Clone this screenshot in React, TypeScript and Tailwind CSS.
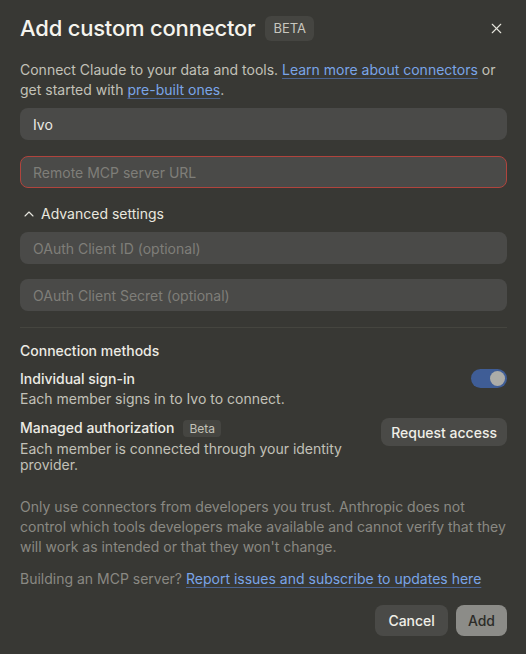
import { X, ChevronUp } from 'lucide-react';

function Field({ placeholder, value, error }: { placeholder: string; value?: string; error?: boolean }) {
  return (
    <div
      className={`h-8 rounded-lg bg-[#4a4a48] px-3 flex items-center text-[14px] ${
        error ? 'border border-[#b0443d]' : 'border border-transparent'
      }`}
    >
      {value ? (
        <span className="text-[#ecebe4]">{value}</span>
      ) : (
        <span className="text-[#7f7e79]">{placeholder}</span>
      )}
    </div>
  );
}

function Link({ children }: { children: React.ReactNode }) {
  return (
    <a className="text-[#7aa5e8] underline decoration-[#4b6390] underline-offset-[3px] decoration-1">{children}</a>
  );
}

export default function App() {
  return (
    <div className="w-[526px] h-[654px] bg-[#383834] pl-5 pr-[19px] pt-3 font-['Inter',sans-serif] text-[#ecebe4]">
      {/* Header */}
      <div className="flex items-center justify-between">
        <div className="flex items-center gap-2.5">
          <h1 className="text-[22px] font-medium tracking-[-0.2px] text-[#f5f4ee]">Add custom connector</h1>
          <span className="rounded-md bg-[#454541] px-2 py-[3px] text-[13px] text-[#c8c7bf]">BETA</span>
        </div>
        <X className="w-[17px] h-[17px] text-[#e5e4dc] mr-[2px]" strokeWidth={1.6} />
      </div>

      <p className="mt-[15px] text-[14px] leading-5 text-[#c2c1b8]">
        Connect Claude to your data and tools. <Link>Learn more about connectors</Link> or get started with{' '}
        <Link>pre-built ones</Link>.
      </p>

      <div className="mt-[8px] flex flex-col gap-4">
        <Field placeholder="Name" value="Ivo" />
        <Field placeholder="Remote MCP server URL" error />
      </div>

      <div className="mt-4 flex items-center gap-1 text-[14px] leading-5 text-[#e8e7df]">
        <ChevronUp className="w-4 h-4 ml-[1px]" strokeWidth={1.6} />
        <span>Advanced settings</span>
      </div>

      <div className="mt-2 flex flex-col gap-[15px]">
        <Field placeholder="OAuth Client ID (optional)" />
        <Field placeholder="OAuth Client Secret (optional)" />
      </div>

      <div className="mt-4 h-px bg-[#45453f]" />

      <div className="mt-[13px] text-[14px] leading-5 font-medium text-[#ecebe4]">Connection methods</div>

      <div className="mt-2 flex items-start justify-between">
        <div>
          <div className="text-[14px] font-medium text-[#ecebe4] leading-5">Individual sign-in</div>
          <div className="text-[14px] text-[#c2c1b8] leading-5">Each member signs in to Ivo to connect.</div>
        </div>
        <div className="w-[36px] h-[19px] rounded-full bg-[#3f5d96] flex items-center justify-end pr-[2px]">
          <div className="w-[15px] h-[15px] rounded-full bg-[#acaca8]" />
        </div>
      </div>

      <div className="mt-[9px] flex items-start justify-between">
        <div className="w-[340px]">
          <div className="flex items-center gap-[9px]">
            <span className="text-[14px] font-medium text-[#ecebe4] leading-5">Managed authorization</span>
            <span className="rounded bg-[#454541] px-1.5 text-[12px] leading-[17px] text-[#c2c1b8]">Beta</span>
          </div>
          <div className="mt-[3px] text-[14px] text-[#c2c1b8] leading-4">
            Each member is connected through your identity
            <br />
            provider.
          </div>
        </div>
        <button className="h-7 rounded-lg bg-[#4a4a47] px-[10px] text-[14px] font-medium text-[#f0efe8]">
          Request access
        </button>
      </div>

      <p className="mt-6 text-[14px] leading-5 text-[#8a8983]">
        Only use connectors from developers you trust. Anthropic does not control which tools developers make available
        and cannot verify that they will work as intended or that they won't change.
      </p>

      <p className="mt-3 text-[14px] leading-5 text-[#8a8983]">
        Building an MCP server? <Link>Report issues and subscribe to updates here</Link>
      </p>

      <div className="mt-4 flex justify-end gap-2">
        <button className="h-[31px] rounded-lg bg-[#4a4a47] px-[13px] text-[14px] font-medium text-[#f0efe8]">
          Cancel
        </button>
        <button className="h-[31px] rounded-lg bg-[#8c8c88] px-[12px] text-[14px] font-medium text-[#2c2c29]">
          Add
        </button>
      </div>
    </div>
  );
}
